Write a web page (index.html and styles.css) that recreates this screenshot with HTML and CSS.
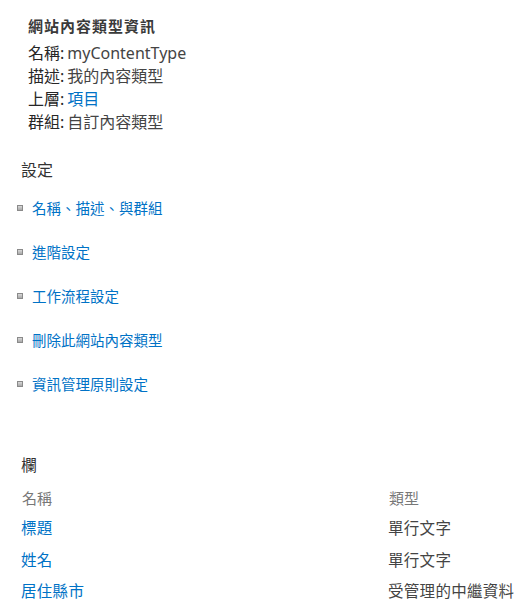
FILE: index.html
```html
<!DOCTYPE html>
<html lang="zh-Hant">
<head>
<meta charset="utf-8">
<title>網站內容類型資訊</title>
<link rel="stylesheet" href="styles.css">
</head>
<body>
<div class="page">
  <section class="info">
    <h1 class="info-title">網站內容類型資訊</h1>
    <div class="info-lines">
      <div class="info-line"><span class="info-label">名稱:</span><span class="info-value">myContentType</span></div>
      <div class="info-line"><span class="info-label">描述:</span><span class="info-value">我的內容類型</span></div>
      <div class="info-line"><span class="info-label">上層:</span><a class="link info-value" href="#">項目</a></div>
      <div class="info-line"><span class="info-label">群組:</span><span class="info-value">自訂內容類型</span></div>
    </div>
  </section>

  <section class="settings">
    <h2 class="section-title">設定</h2>
    <ul class="settings-list">
      <li class="settings-item"><span class="bullet"></span><a class="link" href="#">名稱、描述、與群組</a></li>
      <li class="settings-item"><span class="bullet"></span><a class="link" href="#">進階設定</a></li>
      <li class="settings-item"><span class="bullet"></span><a class="link" href="#">工作流程設定</a></li>
      <li class="settings-item"><span class="bullet"></span><a class="link" href="#">刪除此網站內容類型</a></li>
      <li class="settings-item"><span class="bullet"></span><a class="link" href="#">資訊管理原則設定</a></li>
    </ul>
  </section>

  <section class="columns">
    <h2 class="section-title columns-title">欄</h2>
    <div class="col-table">
      <div class="col-head">名稱</div>
      <div class="col-head">類型</div>
      <div class="col-cell"><a class="link" href="#">標題</a></div>
      <div class="col-cell">單行文字</div>
      <div class="col-cell"><a class="link" href="#">姓名</a></div>
      <div class="col-cell">單行文字</div>
      <div class="col-cell"><a class="link" href="#">居住縣市</a></div>
      <div class="col-cell">受管理的中繼資料</div>
    </div>
  </section>
</div>
</body>
</html>
```

FILE: styles.css
```css
html, body {
  margin: 0;
  padding: 0;
  background: #ffffff;
}

body {
  font-family: "Noto Sans", "Noto Sans CJK TC", sans-serif;
  color: #444444;
  font-size: 16px;
}

.page {
  display: flex;
  flex-direction: column;
}

.link {
  color: #0072c6;
  text-decoration: none;
}

.info {
  padding: 16px 0 0 28px;
}

.info-title {
  margin: 0;
  font-size: 15px;
  line-height: 20px;
  font-weight: 700;
  letter-spacing: 1px;
  color: #3a3a3a;
}

.info-lines {
  margin-top: 6px;
  display: flex;
  flex-direction: column;
}

.info-line {
  line-height: 23px;
  font-size: 16px;
}

.info-label {
  color: #262626;
  margin-right: 3px;
}

.info-value {
  color: #444444;
}

.info-value.link {
  color: #0072c6;
}

.section-title {
  margin: 0;
  font-size: 16px;
  line-height: 22px;
  font-weight: 400;
  color: #333333;
}

.settings {
  margin-top: 25px;
  padding-left: 21px;
}

.settings-list {
  list-style: none;
  margin: 16px 0 0 -4px;
  padding: 0;
  display: flex;
  flex-direction: column;
  gap: 22px;
}

.settings-item {
  display: flex;
  align-items: center;
  line-height: 22px;
  font-size: 14.5px;
}

.bullet {
  width: 6px;
  height: 6px;
  border: 1px solid #8a8a8a;
  background: linear-gradient(#d8d8d8, #a8a8a8);
  box-sizing: border-box;
  margin-right: 9px;
  flex: none;
}

.columns {
  margin-top: 59px;
  padding-left: 21px;
}

.col-table {
  margin-top: 11px;
  display: grid;
  grid-template-columns: 367px auto;
  grid-template-rows: 26px;
  grid-auto-rows: 31.5px;
}

.col-head {
  color: #777777;
  font-size: 15px;
  line-height: 22px;
  padding-left: 1px;
}

.col-cell {
  font-size: 15.5px;
  line-height: 31px;
  letter-spacing: 0.3px;
  color: #444444;
}
```
